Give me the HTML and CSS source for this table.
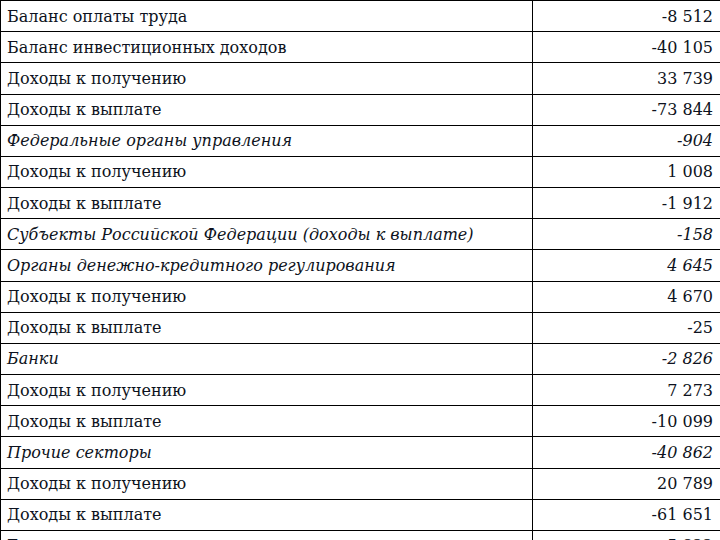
FILE: index.html
```html
<!DOCTYPE html>
<html lang="ru">
<head>
<meta charset="utf-8">
<link rel="stylesheet" href="styles.css">
</head>
<body>
<div class="table">
  <div class="row"><div class="name">Баланс оплаты труда</div><div class="val">-8 512</div></div>
  <div class="row"><div class="name">Баланс инвестиционных доходов</div><div class="val">-40 105</div></div>
  <div class="row"><div class="name">Доходы к получению</div><div class="val">33 739</div></div>
  <div class="row"><div class="name">Доходы к выплате</div><div class="val">-73 844</div></div>
  <div class="row it"><div class="name">Федеральные органы управления</div><div class="val">-904</div></div>
  <div class="row"><div class="name">Доходы к получению</div><div class="val">1 008</div></div>
  <div class="row"><div class="name">Доходы к выплате</div><div class="val">-1 912</div></div>
  <div class="row it"><div class="name">Субъекты Российской Федерации (доходы к выплате)</div><div class="val">-158</div></div>
  <div class="row it"><div class="name">Органы денежно-кредитного регулирования</div><div class="val">4 645</div></div>
  <div class="row"><div class="name">Доходы к получению</div><div class="val">4 670</div></div>
  <div class="row"><div class="name">Доходы к выплате</div><div class="val">-25</div></div>
  <div class="row it"><div class="name">Банки</div><div class="val">-2 826</div></div>
  <div class="row"><div class="name">Доходы к получению</div><div class="val">7 273</div></div>
  <div class="row"><div class="name">Доходы к выплате</div><div class="val">-10 099</div></div>
  <div class="row it"><div class="name">Прочие секторы</div><div class="val">-40 862</div></div>
  <div class="row"><div class="name">Доходы к получению</div><div class="val">20 789</div></div>
  <div class="row"><div class="name">Доходы к выплате</div><div class="val">-61 651</div></div>
  <div class="row"><div class="name">Баланс вторичных доходов</div><div class="val">-5 822</div></div>
</div>
</body>
</html>
```
FILE: styles.css
```css
html, body {
  margin: 0;
  padding: 0;
  background: #fff;
  overflow: hidden;
  width: 720px;
  height: 540px;
}
.table {
  font-family: "DejaVu Serif", serif;
  font-size: 16px;
  color: #0d1220;
  border-top: 1px solid #000;
  border-left: 1px solid #000;
  width: 720px;
}
.row {
  display: grid;
  grid-template-columns: 532px 1fr;
  height: 31.18px;
  box-sizing: border-box;
  border-bottom: 1px solid #000;
}
.name {
  border-right: 1px solid #000;
  padding: 4.5px 0 0 6px;
  white-space: nowrap;
  line-height: 22px;
}
.val {
  text-align: right;
  padding: 4.5px 8px 0 0;
  line-height: 22px;
}
.it .name, .it .val {
  font-style: italic;
}
```
